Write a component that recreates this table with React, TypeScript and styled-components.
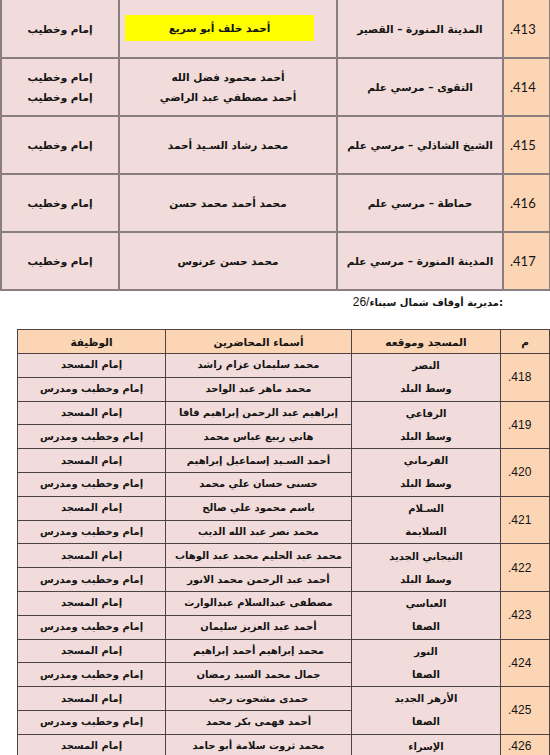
import styled, { createGlobalStyle } from 'styled-components';

const GlobalStyle = createGlobalStyle`
  html, body {
    margin: 0;
    padding: 0;
    background: #ffffff;
  }
  body {
    font-family: "DejaVu Sans", sans-serif;
    color: #141414;
  }
`;

const Page = styled.div`
  width: 550px;
  display: flex;
  flex-direction: column;
`;

const TopTable = styled.table`
  width: 549px;
  border-collapse: collapse;
  table-layout: fixed;
  direction: rtl;
  tr:first-child td {
    border-top: none;
  }
`;

const TopRow = styled.tr`
  height: 58px;
`;

const TopCell = styled.td<{ $orange?: boolean }>`
  border: 2px solid #8a7f80;
  background: ${(p) => (p.$orange ? '#fcd5b4' : '#f2dcdb')};
  text-align: ${(p) => (p.$orange ? 'left' : 'center')};
  padding: ${(p) => (p.$orange ? '0 0 0 6px' : '0')};
  font-family: ${(p) => (p.$orange ? 'Lato, "Liberation Sans", sans-serif' : '"DejaVu Sans", sans-serif')};
  font-size: ${(p) => (p.$orange ? '13px' : '10.5px')};
  font-weight: ${(p) => (p.$orange ? 'normal' : 'bold')};
  line-height: 20px;
  vertical-align: middle;
`;

const Highlight = styled.div`
  background: #ffff00;
  height: 26px;
  line-height: 26px;
  margin: 0 22px 2px 5px;
`;

const Heading = styled.div`
  height: 38px;
  display: flex;
  justify-content: flex-end;
  align-items: baseline;
  padding: 4px 47px 0 0;
  box-sizing: border-box;
  direction: ltr;
`;

const HeadNum = styled.span`
  font-family: "Liberation Sans", sans-serif;
  font-size: 12px;
  font-weight: normal;
`;

const HeadTitle = styled.span`
  font-size: 10px;
  font-weight: bold;
`;

const ListTable = styled.table`
  margin-left: 17px;
  width: 532px;
  border-collapse: collapse;
  table-layout: fixed;
  direction: rtl;
`;

const HeadRow = styled.tr`
  height: 24px;
`;

const SubRow = styled.tr`
  height: 23.8px;
`;

const HeadCell = styled.th`
  border: 1px solid #4e4344;
  background: #fcd5b4;
  font-size: 10.5px;
  font-weight: bold;
  text-align: center;
  padding: 0;
`;

const Cell = styled.td<{ $num?: boolean }>`
  border: 1px solid #4e4344;
  background: ${(p) => (p.$num ? '#fcd5b4' : '#f2dcdb')};
  text-align: ${(p) => (p.$num ? 'left' : 'center')};
  padding: ${(p) => (p.$num ? '0 0 0 7px' : '0')};
  font-family: ${(p) => (p.$num ? '"Liberation Sans", sans-serif' : '"DejaVu Sans", sans-serif')};
  font-size: ${(p) => (p.$num ? '12px' : '10px')};
  font-weight: ${(p) => (p.$num ? 'normal' : 'bold')};
  vertical-align: middle;
  white-space: nowrap;
  line-height: 18px;
`;

const Line = styled.div`
  line-height: 23px;
`;

type TopEntry = {
  num: string;
  mosque: string;
  names: string[];
  roles: string[];
  marked?: boolean;
};

const topRows: TopEntry[] = [
  { num: '413.', mosque: 'المدينة المنورة – القصير', names: ['أحمد خلف أبو سريع'], roles: ['إمام وخطيب'], marked: true },
  { num: '414.', mosque: 'التقوى – مرسي علم', names: ['أحمد محمود فضل الله', 'أحمد مصطفي عبد الراضي'], roles: ['إمام وخطيب', 'إمام وخطيب'] },
  { num: '415.', mosque: 'الشيخ الشاذلي – مرسي علم', names: ['محمد رشاد السـيد أحمد'], roles: ['إمام وخطيب'] },
  { num: '416.', mosque: 'حماطة – مرسي علم', names: ['محمد أحمد محمد حسن'], roles: ['إمام وخطيب'] },
  { num: '417.', mosque: 'المدينة المنورة – مرسي علم', names: ['محمد حسن عرنوس'], roles: ['إمام وخطيب'] },
];

type Person = { name: string; role: string };
type Group = { num: string; mosque: string[]; people: Person[] };

const groups: Group[] = [
  { num: '418.', mosque: ['النصر', 'وسط البلد'], people: [{ name: 'محمد سليمان عزام راشد', role: 'إمام المسجد' }, { name: 'محمد ماهر عبد الواحد', role: 'إمام وخطيب ومدرس' }] },
  { num: '419.', mosque: ['الرفاعي', 'وسط البلد'], people: [{ name: 'إبراهيم عبد الرحمن إبراهيم قاقا', role: 'إمام المسجد' }, { name: 'هاني ربيع عباس محمد', role: 'إمام وخطيب ومدرس' }] },
  { num: '420.', mosque: ['القرماني', 'وسط البلد'], people: [{ name: 'أحمد السـيد إسماعيل إبراهيم', role: 'إمام المسجد' }, { name: 'حسنى حسان علي محمد', role: 'إمام وخطيب ومدرس' }] },
  { num: '421.', mosque: ['السـلام', 'السلايمة'], people: [{ name: 'باسم محمود علي صالح', role: 'إمام المسجد' }, { name: 'محمد نصر عبد الله الديب', role: 'إمام وخطيب ومدرس' }] },
  { num: '422.', mosque: ['التيجاني الجديد', 'وسط البلد'], people: [{ name: 'محمد عبد الحليم محمد عبد الوهاب', role: 'إمام المسجد' }, { name: 'أحمد عبد الرحمن محمد الانور', role: 'إمام وخطيب ومدرس' }] },
  { num: '423.', mosque: ['العباسي', 'الصفا'], people: [{ name: 'مصطفى عبدالسلام عبدالوارث', role: 'إمام المسجد' }, { name: 'أحمد عبد العزيز سليمان', role: 'إمام وخطيب ومدرس' }] },
  { num: '424.', mosque: ['النور', 'الصفا'], people: [{ name: 'محمد إبراهيم أحمد إبراهيم', role: 'إمام المسجد' }, { name: 'جمال محمد السيد رمضان', role: 'إمام وخطيب ومدرس' }] },
  { num: '425.', mosque: ['الأزهر الجديد', 'الصفا'], people: [{ name: 'حمدى مشحوت رجب', role: 'إمام المسجد' }, { name: 'أحمد فهمى بكر محمد', role: 'إمام وخطيب ومدرس' }] },
  { num: '426.', mosque: ['الإسراء'], people: [{ name: 'محمد ثروت سلامة أبو حامد', role: 'إمام المسجد' }] },
];

const App = () => {
  return (
    <Page>
      <GlobalStyle />
      <TopTable>
        <colgroup>
          <col style={{ width: 47 }} />
          <col style={{ width: 166 }} />
          <col style={{ width: 218 }} />
          <col style={{ width: 118 }} />
        </colgroup>
        <tbody>
          {topRows.map((r) => (
            <TopRow key={r.num}>
              <TopCell $orange>{r.num}</TopCell>
              <TopCell>{r.mosque}</TopCell>
              <TopCell>
                {r.marked ? (
                  <Highlight>{r.names[0]}</Highlight>
                ) : (
                  r.names.map((x, i) => <div key={i}>{x}</div>)
                )}
              </TopCell>
              <TopCell>
                {r.roles.map((x, i) => (
                  <div key={i}>{x}</div>
                ))}
              </TopCell>
            </TopRow>
          ))}
        </tbody>
      </TopTable>

      <Heading>
        <HeadNum>26/</HeadNum>
        <HeadTitle>مديرية أوقاف شمال سيناء:</HeadTitle>
      </Heading>

      <ListTable>
        <colgroup>
          <col style={{ width: 49 }} />
          <col style={{ width: 149 }} />
          <col style={{ width: 186 }} />
          <col style={{ width: 148 }} />
        </colgroup>
        <thead>
          <HeadRow>
            <HeadCell>م</HeadCell>
            <HeadCell>المسجد وموقعه</HeadCell>
            <HeadCell>أسماء المحاضرين</HeadCell>
            <HeadCell>الوظيفة</HeadCell>
          </HeadRow>
        </thead>
        <tbody>
          {groups.map((g) =>
            g.people.map((p, i) => (
              <SubRow key={g.num + i}>
                {i === 0 && (
                  <>
                    <Cell $num rowSpan={g.people.length}>
                      {g.num}
                    </Cell>
                    <Cell rowSpan={g.people.length}>
                      {g.mosque.map((m, k) => (
                        <Line key={k}>{m}</Line>
                      ))}
                    </Cell>
                  </>
                )}
                <Cell>{p.name}</Cell>
                <Cell>{p.role}</Cell>
              </SubRow>
            ))
          )}
        </tbody>
      </ListTable>
    </Page>
  );
};

export default App;
